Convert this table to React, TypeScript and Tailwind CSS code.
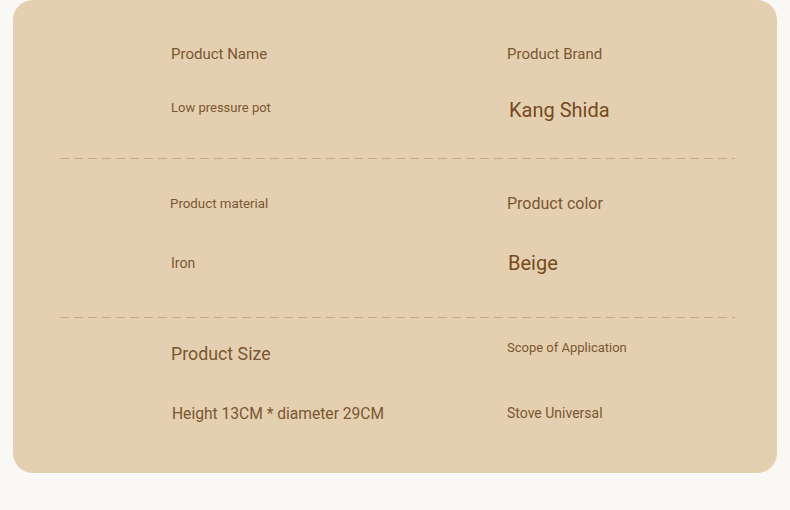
import React from 'react';

type Cell = { text: string; size: string; shift?: string };

const rows: { left: [Cell, Cell]; right: [Cell, Cell]; pad: string; gap: string }[] = [
  {
    left: [
      { text: 'Product Name', size: 'text-[15px]' },
      { text: 'Low pressure pot', size: 'text-[13px]', shift: '-translate-y-[1px]' },
    ],
    right: [
      { text: 'Product Brand', size: 'text-[15px]' },
      { text: 'Kang Shida', size: 'text-[20px] text-[#764a1d]', shift: 'translate-y-[2px] translate-x-[2px]' },
    ],
    pad: 'pt-[40px] pb-[36px]',
    gap: 'mt-[26px]',
  },
  {
    left: [
      { text: 'Product material', size: 'text-[13.3px]', shift: '-translate-x-[1px] translate-y-[1px]' },
      { text: 'Iron', size: 'text-[14px]' },
    ],
    right: [
      { text: 'Product color', size: 'text-[16px]', shift: 'translate-y-[1px]' },
      { text: 'Beige', size: 'text-[20px] text-[#764a1d]', shift: 'translate-x-[1px]' },
    ],
    pad: 'pt-[30px] pb-[40px]',
    gap: 'mt-[32px]',
  },
  {
    left: [
      { text: 'Product Size', size: 'text-[17.8px]', shift: 'translate-y-[2px]' },
      { text: 'Height 13CM * diameter 29CM', size: 'text-[15.6px]', shift: 'translate-x-[1px] translate-y-[2px]' },
    ],
    right: [
      { text: 'Scope of Application', size: 'text-[13px]', shift: '-translate-y-[5px]' },
      { text: 'Stove Universal', size: 'text-[14px]' },
    ],
    pad: 'pt-[20px] pb-[46px]',
    gap: 'mt-[33px]',
  },
];

function Column({ cells, gap }: { cells: [Cell, Cell]; gap: string }) {
  return (
    <div className="flex flex-col">
      <div className={`h-[28px] flex items-center leading-none ${cells[0].size} ${cells[0].shift ?? ''}`}>
        {cells[0].text}
      </div>
      <div className={`h-[28px] flex items-center leading-none ${gap} ${cells[1].size} ${cells[1].shift ?? ''}`}>
        {cells[1].text}
      </div>
    </div>
  );
}

function Divider() {
  return (
    <div className="ml-[47px] mr-[42px] h-px bg-[repeating-linear-gradient(to_right,#c6a983_0_9px,transparent_9px_14px)]" />
  );
}

export default function App() {
  return (
    <div
      className="w-[790px] h-[510px] bg-[#f9f8f5] px-[13px] overflow-hidden"
      style={{ fontFamily: 'Roboto, "Noto Sans", sans-serif' }}
    >
      <div className="bg-[#e4d0b0] rounded-[20px] text-[#7b5631]">
        {rows.map((row, i) => (
          <React.Fragment key={i}>
            {i > 0 && <Divider />}
            <div className={`grid grid-cols-[336px_1fr] pl-[158px] ${row.pad}`}>
              <Column cells={row.left} gap={row.gap} />
              <Column cells={row.right} gap={row.gap} />
            </div>
          </React.Fragment>
        ))}
      </div>
    </div>
  );
}
